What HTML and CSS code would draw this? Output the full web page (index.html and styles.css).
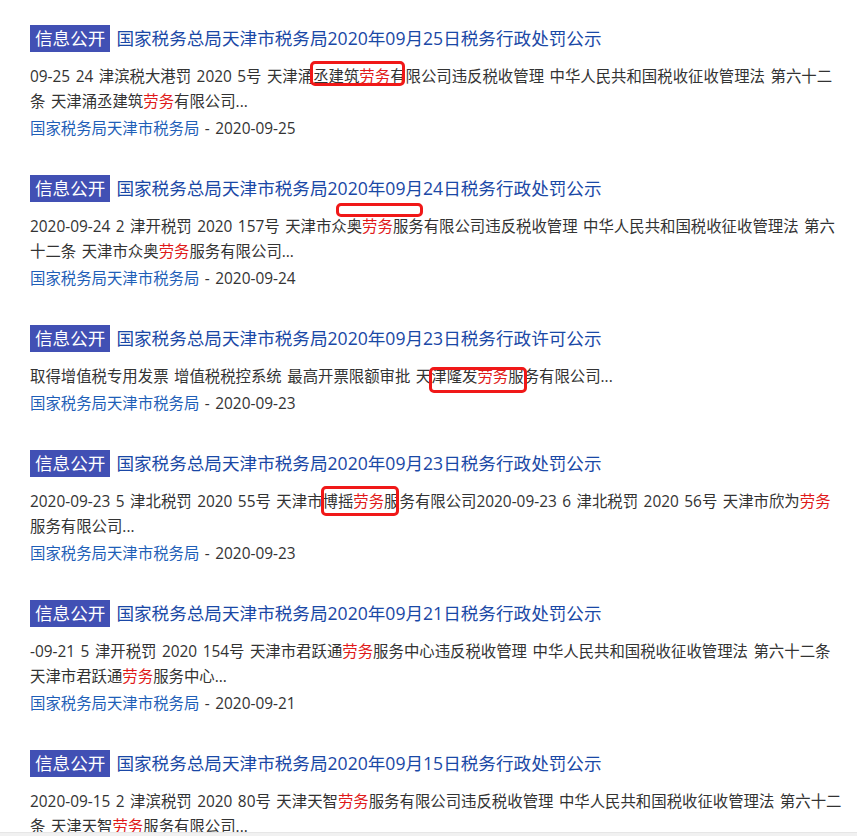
FILE: index.html
```html
<!DOCTYPE html>
<html lang="zh-CN">
<head>
  <meta charset="UTF-8" />
  <meta name="viewport" content="width=device-width, initial-scale=1.0" />
  <title>搜索结果</title>
  <link rel="stylesheet" href="styles.css">
</head>
<body>
  <div class="results">

    <div class="result">
      <div class="result-title">
        <span class="tag">信息公开</span><a href="#">国家税务总局天津市税务局2020年09月25日税务行政处罚公示</a>
      </div>
      <p class="snippet">09-25 24 津滨税大港罚 2020 5号 天津涌丞建筑<em>劳务</em>有限公司违反税收管理 中华人民共和国税收征收管理法 第六十二条 天津涌丞建筑<em>劳务</em>有限公司...</p>
      <p class="source"><span class="site">国家税务局天津市税务局</span> - 2020-09-25</p>
    </div>

    <div class="result">
      <div class="result-title">
        <span class="tag">信息公开</span><a href="#">国家税务总局天津市税务局2020年09月24日税务行政处罚公示</a>
      </div>
      <p class="snippet">2020-09-24 2 津开税罚 2020 157号 天津市众奥<em>劳务</em>服务有限公司违反税收管理 中华人民共和国税收征收管理法 第六十二条 天津市众奥<em>劳务</em>服务有限公司...</p>
      <p class="source"><span class="site">国家税务局天津市税务局</span> - 2020-09-24</p>
    </div>

    <div class="result">
      <div class="result-title">
        <span class="tag">信息公开</span><a href="#">国家税务总局天津市税务局2020年09月23日税务行政许可公示</a>
      </div>
      <p class="snippet">取得增值税专用发票 增值税税控系统 最高开票限额审批 天津隆发<em>劳务</em>服务有限公司...</p>
      <p class="source"><span class="site">国家税务局天津市税务局</span> - 2020-09-23</p>
    </div>

    <div class="result">
      <div class="result-title">
        <span class="tag">信息公开</span><a href="#">国家税务总局天津市税务局2020年09月23日税务行政处罚公示</a>
      </div>
      <p class="snippet">2020-09-23 5 津北税罚 2020 55号 天津市博摇<em>劳务</em>服务有限公司2020-09-23 6 津北税罚 2020 56号 天津市欣为<em>劳务</em>服务有限公司...</p>
      <p class="source"><span class="site">国家税务局天津市税务局</span> - 2020-09-23</p>
    </div>

    <div class="result">
      <div class="result-title">
        <span class="tag">信息公开</span><a href="#">国家税务总局天津市税务局2020年09月21日税务行政处罚公示</a>
      </div>
      <p class="snippet">-09-21 5 津开税罚 2020 154号 天津市君跃通<em>劳务</em>服务中心违反税收管理 中华人民共和国税收征收管理法 第六十二条<br>天津市君跃通<em>劳务</em>服务中心...</p>
      <p class="source"><span class="site">国家税务局天津市税务局</span> - 2020-09-21</p>
    </div>

    <div class="result">
      <div class="result-title">
        <span class="tag">信息公开</span><a href="#">国家税务总局天津市税务局2020年09月15日税务行政处罚公示</a>
      </div>
      <p class="snippet">2020-09-15 2 津滨税罚 2020 80号 天津天智<em>劳务</em>服务有限公司违反税收管理 中华人民共和国税收征收管理法 第六十二条 天津天智<em>劳务</em>服务有限公司...</p>
      <p class="source"><span class="site">国家税务局天津市税务局</span> - 2020-09-15</p>
    </div>

    <!-- hand-drawn markers over the screenshot -->
    <div class="marker marker-1"></div>
    <div class="marker marker-2"></div>
    <div class="marker marker-3"></div>
    <div class="marker marker-4"></div>
  </div>

  <div class="scroll-track"></div>
</body>
</html>
```

FILE: styles.css
```css
* {
  margin: 0;
  padding: 0;
  box-sizing: border-box;
}

body {
  font-family: 'Open Sans', 'Noto Sans CJK SC', sans-serif;
  background: #fff;
  color: #333;
  overflow: hidden;
}

.results {
  position: relative;
  width: 844px;
  padding: 24px 0 0 30px;
}

.result {
  margin-bottom: 33px;
}

.result-title {
  display: flex;
  align-items: center;
  height: 28px;
  font-size: 17.6px;
  white-space: nowrap;
}

.tag {
  display: inline-block;
  background: #4150b4;
  color: #fff;
  line-height: 27px;
  padding: 0 5px;
  margin-right: 6px;
}

.result-title a {
  color: #1a48a6;
  text-decoration: none;
  line-height: 28px;
}

.snippet {
  margin-top: 12px;
  font-size: 15.4px;
  line-height: 25px;
  word-spacing: 1.5px;
}

.snippet em {
  font-style: normal;
  color: #e01a1a;
}

.source {
  margin-top: 2px;
  font-size: 15.4px;
  line-height: 25px;
  word-spacing: 1.5px;
  color: #333;
}

.source .site {
  color: #1f5fb8;
}

.marker {
  position: absolute;
  border: 3px solid #f01818;
  border-radius: 5px;
}

.marker-1 {
  left: 310px;
  top: 61px;
  width: 95px;
  height: 25px;
}

.marker-2 {
  left: 336px;
  top: 203px;
  width: 87px;
  height: 14px;
}

.marker-3 {
  left: 429px;
  top: 367px;
  width: 98px;
  height: 26px;
}

.marker-4 {
  left: 321px;
  top: 486px;
  width: 78px;
  height: 30px;
}

.scroll-track {
  position: fixed;
  left: 0;
  right: 0;
  bottom: 0;
  height: 4px;
  background: #f1f1f1;
  border-top: 1px solid #e6e6e6;
}
```
